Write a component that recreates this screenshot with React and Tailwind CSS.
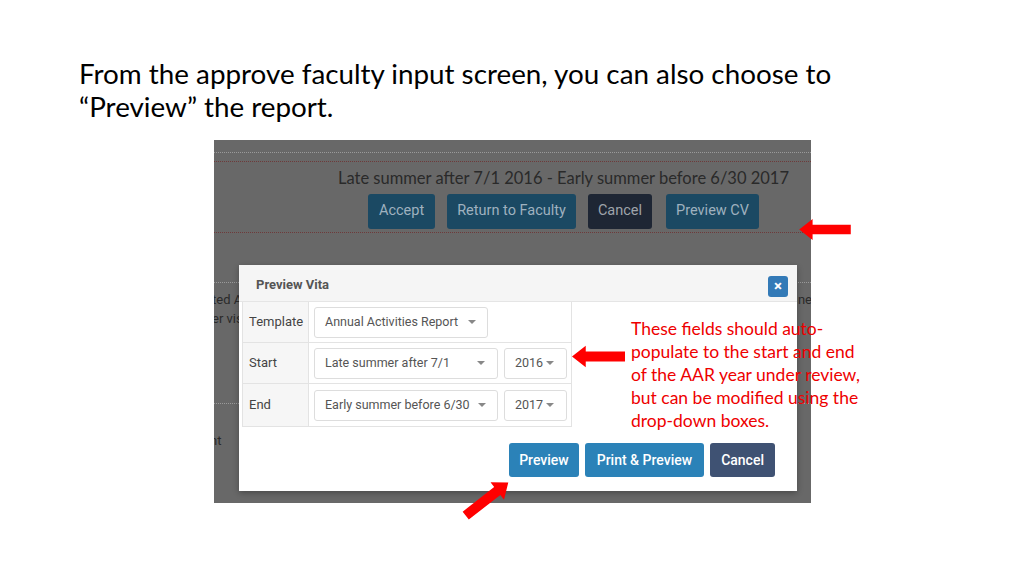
const slideFont = { fontFamily: "Lato, 'Noto Sans', sans-serif" };
const appFont = { fontFamily: "Roboto, 'Liberation Sans', sans-serif" };

function Caret() {
  return <span className="ml-auto h-0 w-0 shrink-0 border-x-[4px] border-t-[4px] border-x-transparent border-t-[#888]" />;
}

function Select({ label, w }) {
  return (
    <div className={`flex h-[31px] shrink-0 items-center whitespace-nowrap rounded-[3px] border border-[#ddd] bg-white pl-[10px] pr-[12px] text-[12.5px] text-[#555] ${w}`}>
      <span>{label}</span>
      <Caret />
    </div>
  );
}

function Row({ name, children, h, last }) {
  return (
    <div className={`flex ${h} ${last ? "" : "border-b border-[#e3e3e3]"}`}>
      <div className="flex w-[66px] shrink-0 items-center border-r border-[#e3e3e3] bg-[#f6f6f6] pl-[6px] text-[13px] text-[#444]">
        {name}
      </div>
      <div className="flex flex-1 items-center gap-[6px] pl-[5px]">{children}</div>
    </div>
  );
}

function Arrow({ className, rotate = 0 }) {
  return (
    <svg className={className} viewBox="0 0 54 22" style={{ transform: `rotate(${rotate}deg)` }}>
      <polygon points="0,11 14,0 14,6 54,6 54,16 14,16 14,22" fill="#ff0000" />
    </svg>
  );
}

export default function App() {
  return (
    <div className="relative h-[576px] w-[1024px] overflow-hidden bg-white" style={slideFont}>
      <p className="pl-[79px] pt-[57px] text-[27.8px] leading-[33px] text-black">
        From the approve faculty input screen, you can also choose to
        <br />
        “Preview” the report.
      </p>

      <div className="relative ml-[214px] mt-[17px] h-[363px] w-[597px] overflow-hidden bg-[#686868]" style={appFont}>
        <div className="mt-[12px] border-t border-dotted border-[#9a9a9a]" />
        <div className="mt-[8px] border-t border-dotted border-[#6e3a3a]" />
        <div className="mt-[4px] pr-[22px] text-right text-[16.5px] text-[#2a2a2a]" style={slideFont}>
          Late summer after 7/1 2016 - Early summer before 6/30 2017
        </div>
        <div className="mt-[3px] flex justify-end gap-[12px] pr-[52px] text-[14.5px]">
          <span className="flex h-[35px] items-center rounded-[3px] bg-[#1b4963] px-[11px] text-[#9fb1bf]">Accept</span>
          <span className="flex h-[35px] items-center rounded-[3px] bg-[#1b4963] px-[10px] text-[#9fb1bf]">Return to Faculty</span>
          <span className="flex h-[35px] items-center rounded-[3px] bg-[#1e2634] px-[10px] text-[#9fa4ab]">Cancel</span>
          <span className="ml-[2px] flex h-[35px] items-center rounded-[3px] bg-[#1b4963] px-[10px] text-[#9fb1bf]">Preview CV</span>
        </div>
        <div className="mt-[3px] border-t border-dotted border-[#6e3a3a]" />
        <div className="mt-[49px] border-t border-dotted border-[#9a9a9a]" />
        <div className="mt-[7px] flex justify-between whitespace-nowrap text-[13px] leading-[19px] text-[#2a2a2a]">
          <div className="-ml-[2px]">
            <div>ted A</div>
            <div>er vis</div>
          </div>
          <div className="-mr-[1px]">ne</div>
        </div>
        <div className="mt-[75px] border-t border-dotted border-[#9a9a9a]" />
        <div className="mt-[27px] -ml-[4px] text-[13px] text-[#2a2a2a]">nt</div>

        <div className="absolute left-[25px] top-[125px] flex h-[226px] w-[558px] flex-col bg-white shadow-[0_2px_6px_rgba(0,0,0,0.3)]">
          <div className="flex h-[37px] items-center justify-between border-b border-[#e5e5e5] bg-[#f5f5f5] pl-[17px] pr-[9px]">
            <span className="mt-[3px] text-[13px] font-bold text-[#555]">Preview Vita</span>
            <span className="mt-[6px] flex h-[21px] w-[20px] items-center justify-center rounded-[3px] bg-[#337ab7] text-[15px] font-bold leading-none text-white">
              ×
            </span>
          </div>
          <div className="ml-[3px] w-[330px] border border-t-0 border-[#e3e3e3]">
            <Row name="Template" h="h-[41px]">
              <Select label="Annual Activities Report" w="w-[174px] gap-[10px]" />
            </Row>
            <Row name="Start" h="h-[41px]">
              <Select label="Late summer after 7/1" w="w-[184px]" />
              <Select label="2016" w="w-[63px]" />
            </Row>
            <Row name="End" h="h-[42px]" last>
              <Select label="Early summer before 6/30" w="w-[184px] gap-[8px]" />
              <Select label="2017" w="w-[63px]" />
            </Row>
          </div>
          <div className="mt-[16px] flex justify-end gap-[6px] pr-[22px] text-[14px] font-medium text-white">
            <span className="flex h-[34px] items-center rounded-[3px] bg-[#2b82b8] px-[10px]">Preview</span>
            <span className="flex h-[34px] items-center rounded-[3px] bg-[#2b82b8] px-[12px]">Print &amp; Preview</span>
            <span className="flex h-[34px] items-center rounded-[3px] bg-[#3f5273] px-[11px]">Cancel</span>
          </div>
        </div>
      </div>

      <div className="absolute left-[631px] top-[317px] whitespace-nowrap text-[17.5px] leading-[23px] text-[#ee0000]" style={slideFont}>
        These fields should auto-
        <br />
        populate to the start and end
        <br />
        of the AAR year under review,
        <br />
        but can be modified using the
        <br />
        drop-down boxes.
      </div>

      <Arrow className="absolute left-[798px] top-[219px] h-[21px] w-[54px]" />
      <Arrow className="absolute left-[572px] top-[345px] h-[23px] w-[53px]" />
      <Arrow className="absolute left-[458px] top-[488px] h-[22px] w-[58px]" rotate={142} />
    </div>
  );
}
